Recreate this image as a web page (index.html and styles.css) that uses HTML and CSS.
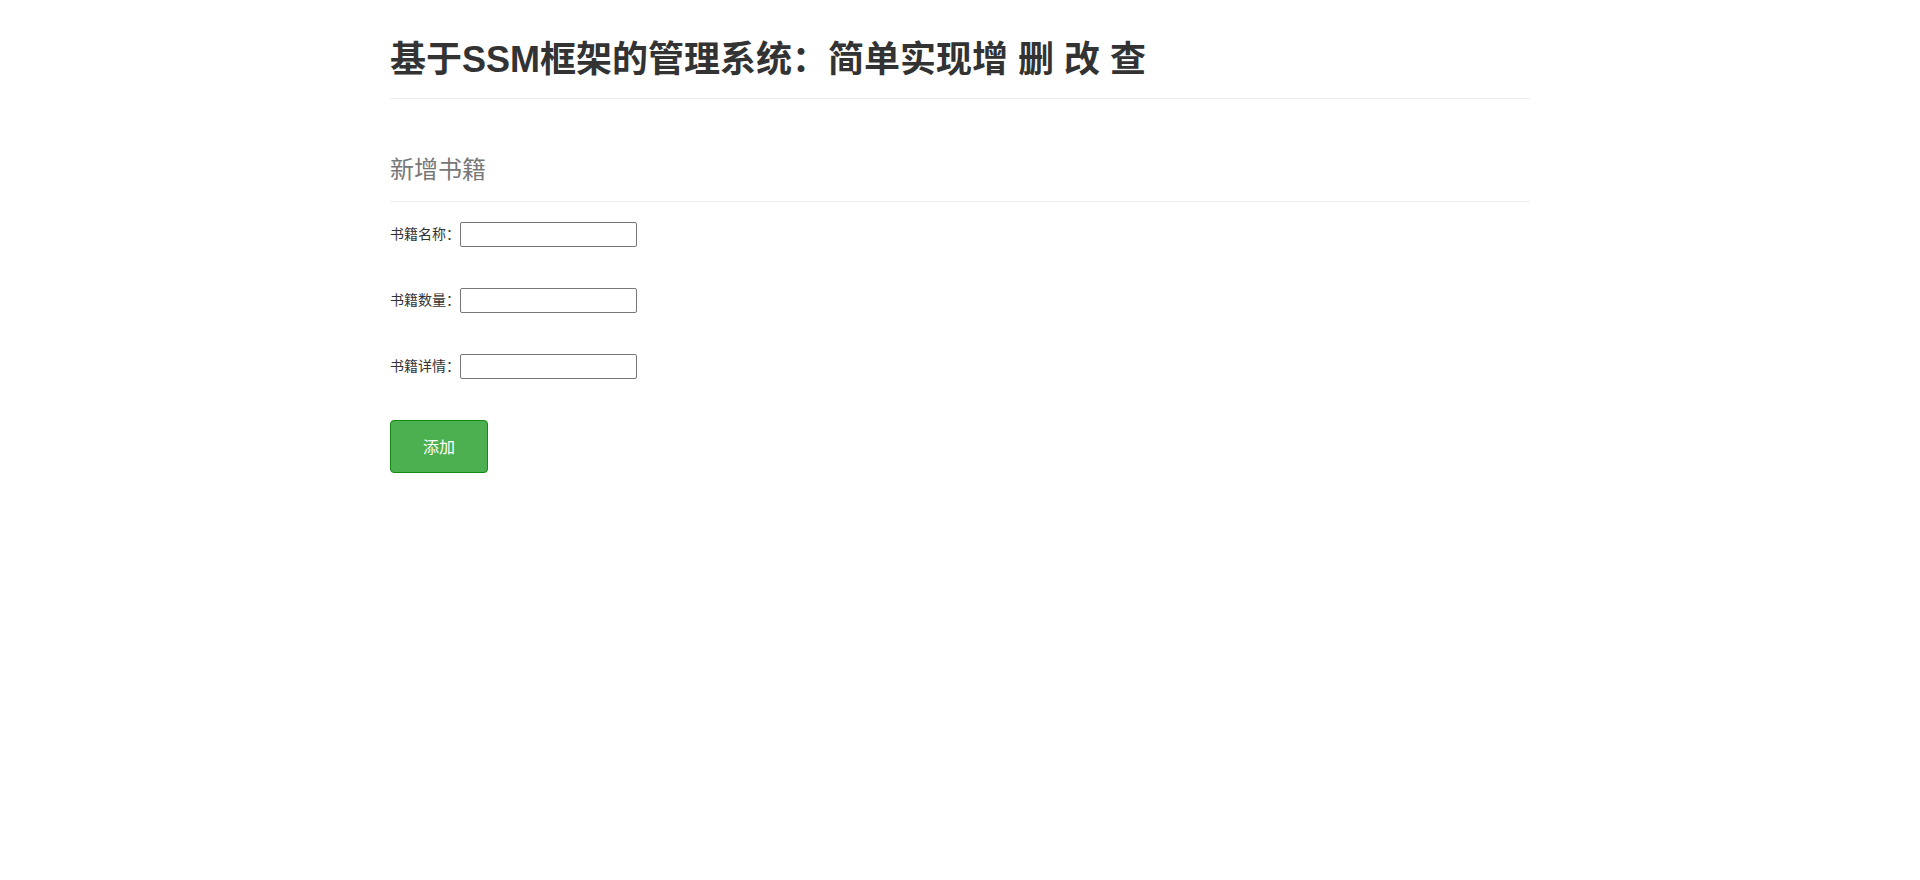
FILE: index.html
```html
<!DOCTYPE html>
<html lang="zh-CN">

<head>
  <meta charset="UTF-8">
  <meta name="viewport" content="width=device-width, initial-scale=1.0">
  <title>新增书籍</title>
  <link rel="stylesheet" href="styles.css">
</head>

<body>
  <div class="container">
    <div class="page-header">
      <h1>基于SSM框架的管理系统：简单实现增 删 改 查</h1>
    </div>

    <div class="page-header sub-header">
      <h2>新增书籍</h2>
    </div>

    <form class="book-form" action="#" method="post">
      <div class="form-row">
        <span class="form-label">书籍名称：</span><input type="text" name="bookName">
      </div>
      <div class="form-row">
        <span class="form-label">书籍数量：</span><input type="text" name="bookCounts">
      </div>
      <div class="form-row">
        <span class="form-label">书籍详情：</span><input type="text" name="detail">
      </div>
      <div class="form-row">
        <button type="submit" class="add-btn">添加</button>
      </div>
    </form>
  </div>
</body>

</html>
```

FILE: styles.css
```css
body {
  margin: 0;
  padding: 0;
  font-family: "Liberation Sans", "Noto Sans CJK SC", sans-serif;
  font-size: 14px;
  line-height: 1.42857;
  color: #333;
  background-color: #fff;
}

.container {
  width: 1140px;
  margin: 0 auto;
}

.page-header {
  margin: 40px 0 0;
  padding-bottom: 9px;
  border-bottom: 1px solid #eee;
}

.page-header h1 {
  margin: 0 0 10px;
  font-size: 36px;
  line-height: 39px;
  font-weight: 700;
  color: #333;
}

.sub-header {
  margin-top: 56px;
  padding-bottom: 16px;
}

.sub-header h2 {
  margin: 0;
  font-size: 24px;
  line-height: 30px;
  font-weight: 400;
  color: #777;
}

.book-form {
  display: flex;
  flex-direction: column;
  gap: 41px;
  margin-top: 20px;
}

.form-row {
  display: flex;
  align-items: center;
  height: 25px;
}

.form-row:last-child {
  height: 53px;
}

.form-label {
  font-size: 14px;
  line-height: 25px;
}

.form-row input {
  box-sizing: border-box;
  width: 177px;
  height: 25px;
  padding: 1px 2px;
  border: 1px solid #767676;
  border-radius: 2px;
  font-size: 13px;
}

.add-btn {
  box-sizing: border-box;
  width: 98px;
  height: 53px;
  padding: 0 0 2px;
  background-color: #4caf50;
  color: white;
  border: 1px solid #138a13;
  border-radius: 4px;
  font-family: "Liberation Sans", "Noto Sans CJK SC", sans-serif;
  font-size: 16px;
  cursor: pointer;
}
```
